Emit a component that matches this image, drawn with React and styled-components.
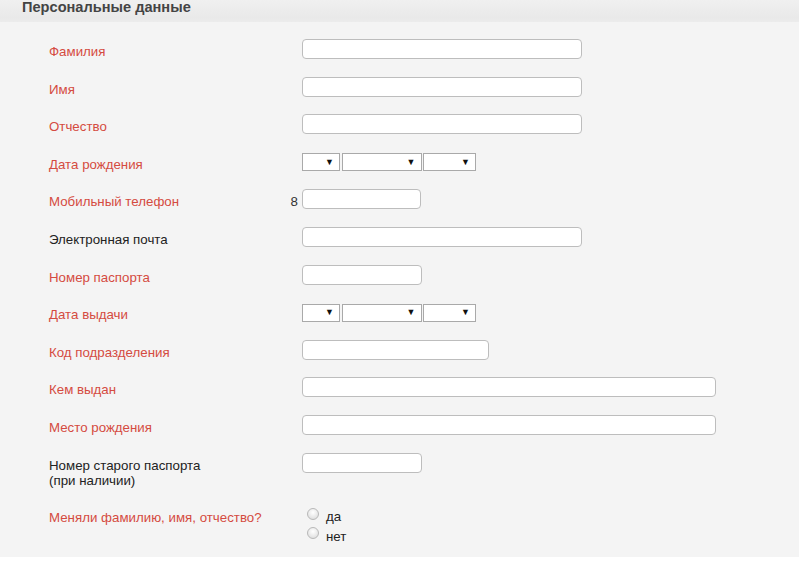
import React from 'react';
import styled, { createGlobalStyle } from 'styled-components';

const GlobalStyle = createGlobalStyle`
  html, body {
    margin: 0;
    padding: 0;
    background: #ffffff;
    font-family: 'Liberation Sans', Arial, sans-serif;
  }
`;

const Panel = styled.section`
  width: 799px;
  background: #f4f4f4;
  padding-bottom: 12.5px;
`;

const Header = styled.div`
  height: 22px;
  background: linear-gradient(#f0f0f0, #e9e9e9 80%, #ececec);
  padding-left: 22px;
  box-sizing: border-box;

  h2 {
    margin: 0;
    font-size: 14.6px;
    line-height: 15px;
    font-weight: bold;
    color: #444444;
  }
`;

const Form = styled.div`
  display: grid;
  grid-template-columns: 241px 12px 1fr;
  row-gap: 17.6px;
  padding: 17px 0 0 49px;
`;

const Label = styled.div`
  padding-top: 5px;
  font-size: 13.3px;
  line-height: 15px;
  color: ${(p) => (p.$required ? '#d44b41' : '#222222')};
`;

const Prefix = styled.div`
  padding-top: 5px;
  font-size: 13.3px;
  line-height: 15px;
  color: #333333;
  text-align: right;
  padding-right: 4px;
`;

const Field = styled.div`
  display: flex;
  gap: 1.5px;
  align-items: flex-start;
`;

const TextInput = styled.input`
  box-sizing: border-box;
  width: ${(p) => p.$w}px;
  height: 20px;
  margin: 0;
  padding: 0 4px;
  border: 1px solid #bdbdbd;
  border-radius: 4px;
  background: #ffffff;
  font: 13px 'Liberation Sans', Arial, sans-serif;
  outline: none;
`;

const SelectWrap = styled.div`
  position: relative;
  width: ${(p) => p.$w}px;
  height: 18px;
  margin: 1px 0;
`;

const Select = styled.select`
  appearance: none;
  box-sizing: border-box;
  width: 100%;
  height: 100%;
  margin: 0;
  border: 1px solid #a9a9a9;
  border-radius: 0;
  background: #ffffff;
  outline: none;
`;

const Arrow = styled.span`
  position: absolute;
  right: 6px;
  top: 3px;
  font-size: 9px;
  line-height: 12px;
  color: #111111;
  pointer-events: none;
`;

const RadioList = styled.div`
  display: flex;
  flex-direction: column;
  padding-left: 5px;
`;

const RadioRow = styled.label`
  display: flex;
  align-items: flex-start;
  gap: 7px;
  height: 19.5px;
  font-size: 13.3px;
  color: #222222;

  span {
    padding-top: 4px;
    line-height: 15px;
  }
`;

const RadioDot = styled.input`
  appearance: none;
  box-sizing: border-box;
  margin: 2.5px 0 0;
  width: 12px;
  height: 12px;
  border-radius: 50%;
  border: 1px solid #b8b8b8;
  background: radial-gradient(circle at 50% 35%, #ffffff, #d8d8d8);
`;

const DateSelect = () => (
  <Field>
    {[38, 80, 53].map((w, i) => (
      <SelectWrap key={i} $w={w}>
        <Select defaultValue="">
          <option value=""></option>
        </Select>
        <Arrow>▼</Arrow>
      </SelectWrap>
    ))}
  </Field>
);

const rows = [
  { label: 'Фамилия', req: true, w: 280 },
  { label: 'Имя', req: true, w: 280 },
  { label: 'Отчество', req: true, w: 280 },
  { label: 'Дата рождения', req: true, date: true },
  { label: 'Мобильный телефон', req: true, w: 119, prefix: '8' },
  { label: 'Электронная почта', req: false, w: 280 },
  { label: 'Номер паспорта', req: true, w: 120 },
  { label: 'Дата выдачи', req: true, date: true },
  { label: 'Код подразделения', req: true, w: 187 },
  { label: 'Кем выдан', req: true, w: 414 },
  { label: 'Место рождения', req: true, w: 414 },
  { label: <>Номер старого паспорта<br />(при наличии)</>, req: false, w: 120 },
];

const App = () => {
  return (
    <>
      <GlobalStyle />
      <Panel>
        <Header>
          <h2>Персональные данные</h2>
        </Header>
        <Form>
          {rows.map((r, i) => (
            <React.Fragment key={i}>
              <Label $required={r.req}>{r.label}</Label>
              <Prefix>{r.prefix || ''}</Prefix>
              {r.date ? (
                <DateSelect />
              ) : (
                <Field>
                  <TextInput type="text" $w={r.w} />
                </Field>
              )}
            </React.Fragment>
          ))}
          <Label $required>Меняли фамилию, имя, отчество?</Label>
          <Prefix />
          <RadioList>
            <RadioRow>
              <RadioDot type="radio" name="changed" />
              <span>да</span>
            </RadioRow>
            <RadioRow>
              <RadioDot type="radio" name="changed" />
              <span>нет</span>
            </RadioRow>
          </RadioList>
        </Form>
      </Panel>
    </>
  );
};

export default App;
